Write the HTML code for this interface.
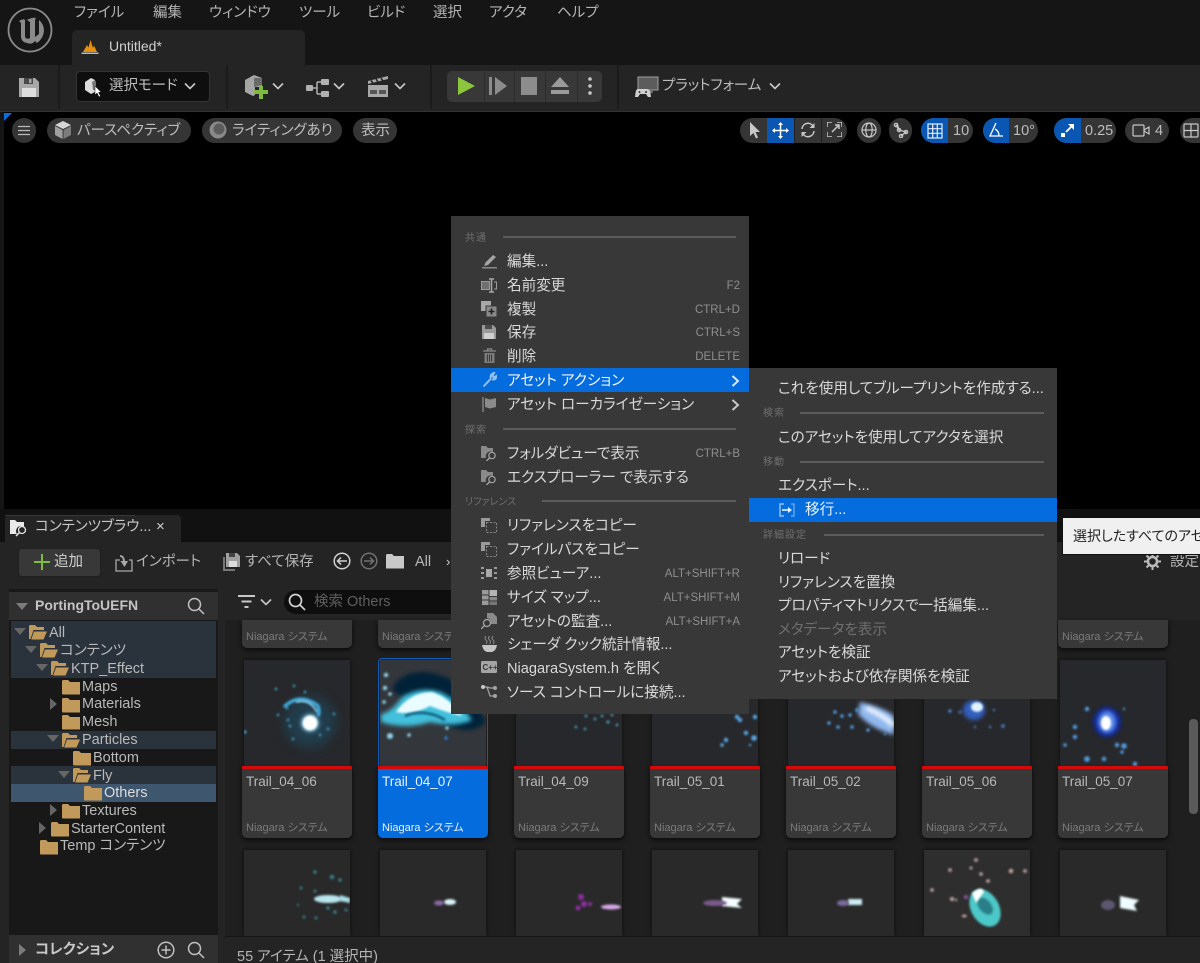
<!DOCTYPE html>
<html lang="ja"><head><meta charset="utf-8"><title>Untitled</title>
<style>
html,body{margin:0;padding:0;background:#000}
#r{position:relative;width:1200px;height:963px;overflow:hidden;background:#000;font-family:"Liberation Sans","Noto Sans CJK JP",sans-serif;font-size:14.5px;color:#c8c8c8;font-feature-settings:"palt"}
#r div,#r span,#r svg{position:absolute}
.t{white-space:nowrap;line-height:20px;height:20px;transform:translateY(1px)}
.m{color:#b4b4b4;top:2px;font-size:14.5px}
.c{background:#383838;border-radius:0 0 5px 5px;width:110px;box-shadow:0 2px 5px #0a0a0a}
.th{background:#27282b;box-shadow:0 0 4px #0c0c0c}
.rl{background:#d20a0a;height:3px;width:110px}
.n{font-size:13.5px;color:#b8b8b8}
.s{font-size:11px;color:#7b7b7b}
.i{color:#d9d9d9;font-size:14.6px}
.k{color:#8e8e8e;font-size:11.5px;text-align:right}
.h{color:#6f6f6f;font-size:10px;letter-spacing:1px}
.l{background:#5c5c5c;height:2px}
.tr{font-size:14.5px;color:#b9b9b9}
.hl{left:11px;width:205px;background:#2a323c}
.p{background:#353535;height:25px;border-radius:13px}
</style></head><body><div id="r">
<svg width="0" height="0" style="position:absolute"><defs>
<symbol id="fo" viewBox="0 0 18 16"><path d="M0 2.500Q0 1 1.500 1H6L8 3H18V15.500H1Q0 15.500 0 14.500Z" fill="#c19a5b"/></symbol>
<symbol id="fp" viewBox="0 0 18 16"><path d="M0 2.500Q0 1 1.500 1H6L8 3H15V6H4.500L1.500 15H0Z" fill="#c19a5b"/><path d="M5 7.500H18L14.500 15.500H2.200Z" fill="#c19a5b"/></symbol>
<filter id="b1" x="-50%" y="-50%" width="200%" height="200%"><feGaussianBlur stdDeviation="1"/></filter>
<filter id="b2" x="-50%" y="-50%" width="200%" height="200%"><feGaussianBlur stdDeviation="2.200"/></filter>
<filter id="b5" x="-50%" y="-50%" width="200%" height="200%"><feGaussianBlur stdDeviation="6"/></filter>
<clipPath id="cc"><rect x="244" y="660" width="106" height="106"/><rect x="380" y="660" width="106" height="106"/><rect x="516" y="660" width="106" height="106"/><rect x="652" y="660" width="106" height="106"/><rect x="788" y="660" width="106" height="106"/><rect x="924" y="660" width="106" height="106"/><rect x="1060" y="660" width="106" height="106"/><rect x="244" y="850" width="106" height="86"/><rect x="380" y="850" width="106" height="86"/><rect x="516" y="850" width="106" height="86"/><rect x="652" y="850" width="106" height="86"/><rect x="788" y="850" width="106" height="86"/><rect x="924" y="850" width="106" height="86"/><rect x="1060" y="850" width="106" height="86"/></clipPath>
</defs></svg>

<!-- title bar -->
<div style="left:0;top:0;width:1200px;height:65px;background:#151515"></div>
<svg style="left:7px;top:7px" width="46" height="46" viewBox="0 0 46 46"><circle cx="23" cy="23" r="21.500" fill="#171717" stroke="#8a8a8a" stroke-width="1.800"/><path d="M12 14Q17 11 18 13V30Q20 33 23 31V15L20 13Q25 10 29 11L28 13V30L32 27V13Q37 17 37 24Q36 32 30 36L28 34Q25 38 20 36Q14 35 14 29V16Z" fill="#8a8a8a"/></svg>
<span class="t m" style="left:74px">ファイル</span><span class="t m" style="left:153px">編集</span><span class="t m" style="left:209px">ウィンドウ</span><span class="t m" style="left:299px">ツール</span><span class="t m" style="left:367px">ビルド</span><span class="t m" style="left:433px">選択</span><span class="t m" style="left:489px">アクタ</span><span class="t m" style="left:557px">ヘルプ</span>
<div style="left:72px;top:30px;width:233px;height:36px;background:#242424;border-radius:5px 5px 0 0"></div>
<svg style="left:81px;top:39px" width="18" height="16" viewBox="0 0 18 16"><path d="M2 13L6 6L7.500 8.500L9.500 1L12 9L13 6.500L16 13Z" fill="#e88f0c"/><rect x="0.500" y="13.500" width="17" height="1.500" fill="#b9b9b9"/></svg>
<span class="t" style="left:109px;top:35px;color:#d0d0d0;font-size:14px">Untitled*</span>

<!-- toolbar -->
<div style="left:0;top:65px;width:1200px;height:46px;background:#242424"></div>
<div style="left:58px;top:65px;width:2px;height:44px;background:#1b1b1b"></div>
<div style="left:226px;top:65px;width:2px;height:44px;background:#1b1b1b"></div>
<div style="left:430px;top:65px;width:2px;height:44px;background:#1b1b1b"></div>
<div style="left:617px;top:65px;width:2px;height:44px;background:#1b1b1b"></div>
<svg style="left:19px;top:77px" width="20" height="20" viewBox="0 0 20 20"><path d="M0 1H16L20 5V20H0Z" fill="#a8a8a8"/><rect x="5" y="1" width="9" height="6" fill="#4a4a4a"/><rect x="10" y="2" width="2.500" height="4" fill="#a8a8a8"/><rect x="3" y="11" width="14" height="9" fill="#dedede"/></svg>
<div style="left:76px;top:71px;width:132px;height:29px;background:#0e0e0e;border:1px solid #333;border-radius:4px"></div>
<svg style="left:85px;top:78px" width="18" height="19" viewBox="0 0 18 19"><path d="M0 4L6 0L10 2V14L6 16L0 12Z" fill="#dcdcdc"/><path d="M7 4L10 2L11 4V12H8Z" fill="#777"/><path d="M10 8V17L12 15L14 19L15.500 18L13.500 14.500L16 14Z" fill="#fff" stroke="#111" stroke-width=".5"/></svg>
<span class="t" style="left:109px;top:75px;color:#bdbdbd">選択モード</span>
<svg style="left:184px;top:82px" width="12" height="8" viewBox="0 0 12 8"><path d="M1 1.500L6 6.500L11 1.500" fill="none" stroke="#c8c8c8" stroke-width="1.600"/></svg>
<svg style="left:244px;top:75px" width="24" height="24" viewBox="0 0 24 24"><path d="M1 5L10 0L18 3V12H11V20L9 21L1 17Z" fill="#a6a6a6"/><path d="M10 3L18 3V10L10 12Z" fill="#6a6a6a"/><path d="M15 11H19V15H24V19H19V24H15V19H10V15H15Z" fill="#7fbb41"/></svg>
<svg style="left:272px;top:82px" width="12" height="8" viewBox="0 0 12 8"><path d="M1 1.500L6 6.500L11 1.500" fill="none" stroke="#c8c8c8" stroke-width="1.600"/></svg>
<svg style="left:306px;top:78px" width="24" height="19" viewBox="0 0 24 19"><rect x="0" y="7" width="7" height="6" rx="1" fill="#b0b0b0"/><rect x="15" y="1" width="8" height="6" rx="1" fill="#b0b0b0"/><rect x="15" y="13" width="8" height="6" rx="1" fill="#b0b0b0"/><path d="M7 10H11M11 4V16M11 4H15M11 16H15" stroke="#b0b0b0" stroke-width="1.500" fill="none"/></svg>
<svg style="left:333px;top:82px" width="12" height="8" viewBox="0 0 12 8"><path d="M1 1.500L6 6.500L11 1.500" fill="none" stroke="#c8c8c8" stroke-width="1.600"/></svg>
<svg style="left:367px;top:76px" width="22" height="21" viewBox="0 0 22 21"><path d="M1 5L21 0V3L1 8Z" fill="#a8a8a8"/><path d="M4 4.500L6 7M9 3L11 6M14 2L16 5" stroke="#242424" stroke-width="1.500"/><rect x="1" y="9" width="20" height="12" fill="#a8a8a8"/><rect x="3" y="14" width="7" height="4" fill="#555"/><rect x="12" y="14" width="7" height="4" fill="#555"/></svg>
<svg style="left:394px;top:82px" width="12" height="8" viewBox="0 0 12 8"><path d="M1 1.500L6 6.500L11 1.500" fill="none" stroke="#c8c8c8" stroke-width="1.600"/></svg>
<div style="left:447px;top:71px;width:155px;height:31px;background:#383838;border-radius:5px"></div>
<div style="left:484px;top:71px;width:1px;height:31px;background:#2c2c2c"></div><div style="left:514px;top:71px;width:1px;height:31px;background:#2c2c2c"></div><div style="left:545px;top:71px;width:1px;height:31px;background:#2c2c2c"></div><div style="left:577px;top:71px;width:1px;height:31px;background:#2c2c2c"></div>
<svg style="left:456px;top:76px" width="20" height="20" viewBox="0 0 20 20"><path d="M2 1L19 10L2 19Z" fill="#8cc63f"/></svg>
<svg style="left:488px;top:77px" width="20" height="18" viewBox="0 0 20 18"><rect x="1" y="0" width="3" height="18" fill="#8c8c8c"/><path d="M7 0L19 9L7 18Z" fill="#8c8c8c"/></svg>
<svg style="left:520px;top:77px" width="18" height="18"><rect x="1" y="0" width="16" height="18" fill="#8c8c8c"/></svg>
<svg style="left:550px;top:77px" width="20" height="18" viewBox="0 0 20 18"><path d="M10 0L19 10H1Z" fill="#9a9a9a"/><rect x="1" y="13" width="18" height="4" fill="#9a9a9a"/></svg>
<svg style="left:587px;top:76px" width="6" height="20"><circle cx="3" cy="3" r="1.800" fill="#c8c8c8"/><circle cx="3" cy="10" r="1.800" fill="#c8c8c8"/><circle cx="3" cy="17" r="1.800" fill="#c8c8c8"/></svg>
<svg style="left:635px;top:76px" width="24" height="22" viewBox="0 0 24 22"><rect x="3" y="1" width="20" height="13" fill="#5c5c5c" stroke="#a0a0a0"/><rect x="8" y="14" width="10" height="3" fill="#6c6c6c"/><path d="M3 13H12Q15 13 15.500 17L16 21H13L11 18H5L3 21H0L.5 17Q1 13 3 13Z" fill="#d0d0d0"/><circle cx="4.500" cy="16" r="1" fill="#333"/><circle cx="11" cy="16" r="1" fill="#333"/></svg>
<span class="t" style="left:662px;top:75px;color:#bdbdbd">プラットフォーム</span>
<svg style="left:769px;top:82px" width="12" height="8" viewBox="0 0 12 8"><path d="M1 1.500L6 6.500L11 1.500" fill="none" stroke="#c8c8c8" stroke-width="1.600"/></svg>

<!-- viewport top -->
<div style="left:0;top:111px;width:1200px;height:1px;background:#0d3b66"></div>
<svg style="left:4px;top:113px" width="8" height="8"><path d="M0 0H8L0 8Z" fill="#0a6fd8"/></svg>
<div style="left:0;top:112px;width:4px;height:397px;background:#151515"></div>
<div class="p" style="left:12px;top:118px;width:24px"></div>
<svg style="left:18px;top:125px" width="12" height="11"><path d="M0 1.500H12M0 5.500H12M0 9.500H12" stroke="#bbb" stroke-width="1.300"/></svg>
<div class="p" style="left:47px;top:118px;width:144px"></div>
<svg style="left:54px;top:121px" width="18" height="18" viewBox="0 0 18 18"><path d="M9 0L17 4L9 8L1 4Z" fill="#d4d4d4"/><path d="M1 5L8.500 9V18L1 14Z" fill="#a0a0a0"/><path d="M17 5L9.500 9V18L17 14Z" fill="#7c7c7c"/></svg>
<span class="t" style="left:77px;top:120px;color:#bdbdbd">パースペクティブ</span>
<div class="p" style="left:202px;top:118px;width:140px"></div>
<svg style="left:209px;top:121px" width="18" height="18" viewBox="0 0 18 18"><circle cx="9" cy="9" r="8.500" fill="#8a8a8a"/><circle cx="10" cy="8" r="5.500" fill="#5c5c5c"/></svg>
<span class="t" style="left:232px;top:120px;color:#bdbdbd">ライティングあり</span>
<div class="p" style="left:353px;top:118px;width:44px"></div>
<span class="t" style="left:361px;top:120px;color:#bdbdbd">表示</span>

<!-- viewport right -->
<div class="p" style="left:740px;top:118px;width:107px"></div>
<div style="left:767px;top:118px;width:27px;height:25px;background:#0a57b3"></div>
<div style="left:794px;top:118px;width:1px;height:25px;background:#222"></div><div style="left:821px;top:118px;width:1px;height:25px;background:#222"></div>
<svg style="left:749px;top:122px" width="12" height="17" viewBox="0 0 12 17"><path d="M1 0L11 10H6.500L9 15.500L7 16.500L4.500 11L1 14Z" fill="#c8c8c8"/></svg>
<svg style="left:772px;top:122px" width="17" height="17" viewBox="0 0 17 17"><path d="M8.500 1V16M1 8.500H16" stroke="#fff" stroke-width="1.500"/><path d="M8.500 0L11 3H6ZM8.500 17L11 14H6ZM0 8.500L3 6V11ZM17 8.500L14 6V11Z" fill="#fff"/></svg>
<svg style="left:800px;top:122px" width="16" height="16" viewBox="0 0 16 16"><path d="M2 7A6 6 0 0 1 13 4M14 9A6 6 0 0 1 3 12" fill="none" stroke="#c8c8c8" stroke-width="1.500"/><path d="M14.500 1V6H9.500ZM1.500 15V10H6.500Z" fill="#c8c8c8"/></svg>
<svg style="left:827px;top:122px" width="15" height="15" viewBox="0 0 15 15"><path d="M0 5V0H5M10 15H15V10M0 10V15H5M15 5V0H10" fill="none" stroke="#c8c8c8" stroke-width="1.500"/><path d="M5 10L12 3M8 3H12V7" fill="none" stroke="#c8c8c8" stroke-width="1.500"/></svg>
<div class="p" style="left:857px;top:118px;width:24px"></div>
<svg style="left:861px;top:122px" width="16" height="16" viewBox="0 0 16 16" fill="none" stroke="#c8c8c8" stroke-width="1.200"><circle cx="8" cy="8" r="7"/><ellipse cx="8" cy="8" rx="3.200" ry="7"/><path d="M1 8H15"/></svg>
<div class="p" style="left:889px;top:118px;width:23px"></div>
<svg style="left:893px;top:122px" width="16" height="16" viewBox="0 0 16 16" fill="none" stroke="#c8c8c8" stroke-width="1.300"><path d="M3 3L6 8L13 10L8 14M6 8L4 1"/><circle cx="3" cy="3" r="1.600"/><circle cx="6" cy="8" r="1.600"/><circle cx="13" cy="10" r="1.600"/><circle cx="8" cy="14" r="1.600"/></svg>
<div class="p" style="left:921px;top:118px;width:52px"></div>
<div style="left:921px;top:118px;width:27px;height:25px;background:#0a57b3;border-radius:13px 0 0 13px"></div>
<svg style="left:927px;top:123px" width="16" height="16" viewBox="0 0 16 16" fill="none" stroke="#e4eefa" stroke-width="1.200"><rect x="1" y="1" width="14" height="14"/><path d="M5.700 1V15M10.300 1V15M1 5.700H15M1 10.300H15"/></svg>
<span class="t" style="left:953px;top:120px;color:#bdbdbd">10</span>
<div class="p" style="left:983px;top:118px;width:55px"></div>
<div style="left:983px;top:118px;width:26px;height:25px;background:#0a57b3;border-radius:13px 0 0 13px"></div>
<svg style="left:988px;top:122px" width="16" height="16" viewBox="0 0 16 16" fill="none" stroke="#fff" stroke-width="1.300"><path d="M8 1L2 14H15M7 7Q11 9 11 14"/></svg>
<span class="t" style="left:1013px;top:120px;color:#bdbdbd">10°</span>
<div class="p" style="left:1054px;top:118px;width:62px"></div>
<div style="left:1054px;top:118px;width:27px;height:25px;background:#0a57b3;border-radius:13px 0 0 13px"></div>
<svg style="left:1060px;top:123px" width="15" height="15" viewBox="0 0 15 15"><path d="M6 9L12 3" stroke="#fff" stroke-width="1.800"/><path d="M8 1H14V7ZM1 10H5V14H1Z" fill="#fff"/></svg>
<span class="t" style="left:1085px;top:120px;color:#bdbdbd">0.25</span>
<div class="p" style="left:1125px;top:118px;width:44px"></div>
<svg style="left:1132px;top:124px" width="19" height="13" viewBox="0 0 19 13" fill="none" stroke="#c8c8c8" stroke-width="1.200"><rect x="1" y="1" width="11" height="11" rx="1"/><path d="M12 6L17 3V10L12 7"/></svg>
<span class="t" style="left:1155px;top:120px;color:#bdbdbd">4</span>
<div class="p" style="left:1180px;top:118px;width:40px"></div>
<svg style="left:1183px;top:123px" width="16" height="15" viewBox="0 0 16 15" fill="none" stroke="#c8c8c8" stroke-width="1.200"><rect x="1" y="1" width="14" height="13" rx="1"/><path d="M8 1V14M1 7.500H15"/></svg>

<!-- content browser -->
<div style="left:0;top:509px;width:1200px;height:454px;background:#111"></div>
<div style="left:5px;top:515px;width:176px;height:27px;background:#242424;border-radius:4px 4px 0 0"></div>
<div style="left:5px;top:515px;width:130px;height:1px;background:#17405f"></div>
<svg style="left:10px;top:518px" width="19" height="19" viewBox="0 0 19 19"><path d="M0 2H5L7 4H14V9A5 5 0 0 0 7 16H0Z" fill="#e8e8e8"/><circle cx="12" cy="12" r="3.500" fill="none" stroke="#e8e8e8" stroke-width="1.300"/><path d="M9.500 14.500L6 18" stroke="#e8e8e8" stroke-width="1.500"/></svg>
<span class="t" style="left:35px;top:516px;color:#c8c8c8">コンテンツブラウ...</span>
<span class="t" style="left:156px;top:516px;color:#d0d0d0;font-size:15px">×</span>
<div style="left:0;top:542px;width:1200px;height:38px;background:#242424"></div>
<div style="left:18px;top:548px;width:81px;height:27px;background:#383838;border:1px solid #202020;border-radius:4px"></div>
<svg style="left:34px;top:554px" width="16" height="16"><path d="M8 0V16M0 8H16" stroke="#7fbb41" stroke-width="2"/></svg>
<span class="t" style="left:54px;top:551px;color:#d0d0d0">追加</span>
<svg style="left:115px;top:554px" width="18" height="18" viewBox="0 0 18 18" fill="none" stroke="#a8a8a8" stroke-width="1.300"><path d="M5 6H1V17H17V6H14"/><path d="M5 2Q9 2 9 8" stroke-width="1.800"/><path d="M5.500 7L9.500 13L13 7Z" fill="#a8a8a8" stroke="none"/></svg>
<span class="t" style="left:136px;top:551px;color:#b4b4b4">インポート</span>
<svg style="left:223px;top:553px" width="17" height="18" viewBox="0 0 17 18"><path d="M0 4H2V16H12V18H0Z" fill="#777"/><path d="M3 0H14L17 3V14H3Z" fill="#a0a0a0"/><rect x="6" y="0" width="6" height="4" fill="#444"/><rect x="6" y="8" width="8" height="6" fill="#dedede"/></svg>
<span class="t" style="left:245px;top:551px;color:#b4b4b4">すべて保存</span>
<svg style="left:333px;top:552px" width="18" height="18" viewBox="0 0 18 18" fill="none" stroke="#d0d0d0" stroke-width="1.500"><circle cx="9" cy="9" r="7.800"/><path d="M14 9H5M8 5.500L4.500 9L8 12.500"/></svg>
<svg style="left:360px;top:552px" width="18" height="18" viewBox="0 0 18 18" fill="none" stroke="#707070" stroke-width="1.500"><circle cx="9" cy="9" r="7.800"/><path d="M4 9H13M10 5.500L13.500 9L10 12.500"/></svg>
<svg style="left:386px;top:553px" width="18" height="16" viewBox="0 0 18 16"><path d="M0 2.500Q0 1 1.500 1H6L8 3H18V15.500H0Z" fill="#c8c8c8"/></svg>
<span class="t" style="left:415px;top:551px;color:#b8b8b8">All</span>
<span class="t" style="left:446px;top:551px;color:#d0d0d0;font-size:13px">›</span>
<svg style="left:1144px;top:553px" width="17" height="17" viewBox="0 0 17 17"><circle cx="8.500" cy="8.500" r="4.500" fill="none" stroke="#bbb" stroke-width="2.500"/><path d="M8.500 0V3M8.500 14V17M0 8.500H3M14 8.500H17M2.500 2.500L4.500 4.500M12.500 12.500L14.500 14.500M14.500 2.500L12.500 4.500M2.500 14.500L4.500 12.500" stroke="#bbb" stroke-width="2"/></svg>
<span class="t" style="left:1170px;top:551px;color:#b4b4b4">設定</span>

<!-- left panel -->
<div style="left:0;top:580px;width:225px;height:383px;background:#242424"></div>
<div style="left:9px;top:589px;width:209px;height:374px;background:#181818"></div>
<div style="left:9px;top:592px;width:209px;height:28px;background:#303030"></div>
<svg style="left:16px;top:603px" width="12" height="7"><path d="M0 0H12L6 7Z" fill="#7c7c7c"/></svg>
<span class="t" style="left:35px;top:594px;color:#c4c4c4;font-weight:700;font-size:14px">PortingToUEFN</span>
<svg style="left:187px;top:597px" width="18" height="18" viewBox="0 0 18 18" fill="none" stroke="#c0c0c0" stroke-width="1.500"><circle cx="7.500" cy="7.500" r="6"/><path d="M12 12L17 17"/></svg>
<div class="hl" style="top:621px;height:57px"></div>
<div class="hl" style="top:731px;height:18px"></div>
<div class="hl" style="top:766px;height:18px"></div>
<div class="hl" style="top:784px;height:18px;background:#3f566f"></div>
<svg style="left:14px;top:628px" width="12" height="7"><path d="M0 0H12L6 7Z" fill="#666"/></svg><svg style="left:29px;top:624px" width="18" height="16"><use href="#fp"/></svg><span class="t tr" style="left:49px;top:622px">All</span>
<svg style="left:25px;top:646px" width="12" height="7"><path d="M0 0H12L6 7Z" fill="#666"/></svg><svg style="left:40px;top:642px" width="18" height="16"><use href="#fp"/></svg><span class="t tr" style="left:60px;top:640px">コンテンツ</span>
<svg style="left:36px;top:664px" width="12" height="7"><path d="M0 0H12L6 7Z" fill="#666"/></svg><svg style="left:51px;top:660px" width="18" height="16"><use href="#fp"/></svg><span class="t tr" style="left:71px;top:658px">KTP_Effect</span>
<svg style="left:62px;top:679px" width="18" height="16"><use href="#fo"/></svg><span class="t tr" style="left:82px;top:676px">Maps</span>
<svg style="left:50px;top:698px" width="7" height="12"><path d="M0 0L7 6L0 12Z" fill="#666"/></svg><svg style="left:62px;top:697px" width="18" height="16"><use href="#fo"/></svg><span class="t tr" style="left:82px;top:693px">Materials</span>
<svg style="left:62px;top:714px" width="18" height="16"><use href="#fo"/></svg><span class="t tr" style="left:82px;top:711px">Mesh</span>
<svg style="left:47px;top:735px" width="12" height="7"><path d="M0 0H12L6 7Z" fill="#666"/></svg><svg style="left:62px;top:732px" width="18" height="16"><use href="#fp"/></svg><span class="t tr" style="left:82px;top:729px">Particles</span>
<svg style="left:73px;top:750px" width="18" height="16"><use href="#fo"/></svg><span class="t tr" style="left:93px;top:747px">Bottom</span>
<svg style="left:58px;top:771px" width="12" height="7"><path d="M0 0H12L6 7Z" fill="#666"/></svg><svg style="left:73px;top:767px" width="18" height="16"><use href="#fp"/></svg><span class="t tr" style="left:93px;top:765px">Fly</span>
<svg style="left:84px;top:785px" width="18" height="16"><use href="#fo"/></svg><span class="t tr" style="left:104px;top:782px;color:#dcdcdc">Others</span>
<svg style="left:50px;top:804px" width="7" height="12"><path d="M0 0L7 6L0 12Z" fill="#666"/></svg><svg style="left:62px;top:803px" width="18" height="16"><use href="#fo"/></svg><span class="t tr" style="left:82px;top:800px">Textures</span>
<svg style="left:39px;top:822px" width="7" height="12"><path d="M0 0L7 6L0 12Z" fill="#666"/></svg><svg style="left:51px;top:821px" width="18" height="16"><use href="#fo"/></svg><span class="t tr" style="left:71px;top:818px">StarterContent</span>
<svg style="left:40px;top:839px" width="18" height="16"><use href="#fo"/></svg><span class="t tr" style="left:60px;top:835px">Temp コンテンツ</span>
<div style="left:9px;top:935px;width:209px;height:28px;background:#303030"></div>
<svg style="left:19px;top:944px" width="7" height="12"><path d="M0 0L7 6L0 12Z" fill="#7c7c7c"/></svg>
<span class="t" style="left:35px;top:939px;color:#c8c8c8;font-weight:700">コレクション</span>
<svg style="left:157px;top:941px" width="18" height="18" viewBox="0 0 18 18" fill="none" stroke="#c0c0c0" stroke-width="1.500"><circle cx="9" cy="9" r="7.800"/><path d="M9 4.500V13.500M4.500 9H13.500"/></svg>
<svg style="left:187px;top:941px" width="18" height="18" viewBox="0 0 18 18" fill="none" stroke="#c0c0c0" stroke-width="1.500"><circle cx="7.500" cy="7.500" r="6"/><path d="M12 12L17 17"/></svg>

<!-- asset area -->
<div style="left:225px;top:580px;width:975px;height:383px;background:#1f1f1f"></div>
<div style="left:225px;top:580px;width:975px;height:40px;background:#242424"></div>
<svg style="left:238px;top:595px" width="17" height="13"><path d="M0 1H17M3.500 6.500H13.500M6.500 12H10.500" stroke="#c8c8c8" stroke-width="2"/></svg>
<svg style="left:260px;top:598px" width="12" height="8" viewBox="0 0 12 8"><path d="M1 1.500L6 6.500L11 1.500" fill="none" stroke="#c8c8c8" stroke-width="1.600"/></svg>
<div style="left:284px;top:590px;width:180px;height:24px;background:#0e0e0e;border-radius:12px"></div>
<svg style="left:288px;top:593px" width="18" height="18" viewBox="0 0 18 18" fill="none" stroke="#d0d0d0" stroke-width="1.700"><circle cx="7.500" cy="7.500" r="6"/><path d="M12 12L17 17"/></svg>
<span class="t" style="left:314px;top:591px;color:#5e5e5e">検索 Others</span>

<!-- top partial cards -->
<div class="c" style="left:242px;top:620px;height:28px"></div><div class="c" style="left:378px;top:620px;height:28px"></div><div class="c" style="left:1058px;top:620px;height:28px"></div>
<span class="t s" style="left:246px;top:626px">Niagara システム</span><span class="t s" style="left:382px;top:626px">Niagara システム</span><span class="t s" style="left:1062px;top:626px">Niagara システム</span>

<!-- cards row 1 -->
<div class="th" style="left:244px;top:660px;width:106px;height:106px"></div><div class="c" style="left:242px;top:767px;height:71px"></div><div class="rl" style="left:242px;top:766px"></div><span class="t n" style="left:246px;top:771px">Trail_04_06</span><span class="t s" style="left:246px;top:817px">Niagara システム</span>
<div style="left:378px;top:658px;width:108px;height:108px;border:1px solid #0b5cb5;border-radius:4px 4px 0 0"></div><div class="th" style="left:380px;top:660px;width:106px;height:106px;background:#33373c;box-shadow:none"></div><div class="c" style="left:378px;top:767px;height:71px;background:#046cdc"></div><div class="rl" style="left:378px;top:766px"></div><span class="t n" style="left:382px;top:771px;color:#e8f2fd">Trail_04_07</span><span class="t s" style="left:382px;top:817px;color:#e8f2fd">Niagara システム</span>
<div class="th" style="left:516px;top:660px;width:106px;height:106px"></div><div class="c" style="left:514px;top:767px;height:71px"></div><div class="rl" style="left:514px;top:766px"></div><span class="t n" style="left:518px;top:771px">Trail_04_09</span><span class="t s" style="left:518px;top:817px">Niagara システム</span>
<div class="th" style="left:652px;top:660px;width:106px;height:106px"></div><div class="c" style="left:650px;top:767px;height:71px"></div><div class="rl" style="left:650px;top:766px"></div><span class="t n" style="left:654px;top:771px">Trail_05_01</span><span class="t s" style="left:654px;top:817px">Niagara システム</span>
<div class="th" style="left:788px;top:660px;width:106px;height:106px"></div><div class="c" style="left:786px;top:767px;height:71px"></div><div class="rl" style="left:786px;top:766px"></div><span class="t n" style="left:790px;top:771px">Trail_05_02</span><span class="t s" style="left:790px;top:817px">Niagara システム</span>
<div class="th" style="left:924px;top:660px;width:106px;height:106px"></div><div class="c" style="left:922px;top:767px;height:71px"></div><div class="rl" style="left:922px;top:766px"></div><span class="t n" style="left:926px;top:771px">Trail_05_06</span><span class="t s" style="left:926px;top:817px">Niagara システム</span>
<div class="th" style="left:1060px;top:660px;width:106px;height:106px"></div><div class="c" style="left:1058px;top:767px;height:71px"></div><div class="rl" style="left:1058px;top:766px"></div><span class="t n" style="left:1062px;top:771px">Trail_05_07</span><span class="t s" style="left:1062px;top:817px">Niagara システム</span>

<!-- cards row 2 -->
<div class="th" style="left:244px;top:850px;width:106px;height:86px;background:#292929"></div>
<div class="th" style="left:380px;top:850px;width:106px;height:86px;background:#292929"></div>
<div class="th" style="left:516px;top:850px;width:106px;height:86px;background:#292929"></div>
<div class="th" style="left:652px;top:850px;width:106px;height:86px;background:#292929"></div>
<div class="th" style="left:788px;top:850px;width:106px;height:86px;background:#292929"></div>
<div class="th" style="left:924px;top:850px;width:106px;height:86px;background:#2e2e2e"></div>
<div class="th" style="left:1060px;top:850px;width:106px;height:86px;background:#292929"></div>

<!-- thumbnail art -->
<svg style="left:0;top:0" width="1200" height="963" viewBox="0 0 1200 963"><g clip-path="url(#cc)">
<circle cx="310" cy="722" r="26" fill="#176f9c" opacity=".3" filter="url(#b5)"/>
<path d="M284 707Q300 692 318 706Q320 712 318 716" fill="none" stroke="#3ea8dc" stroke-width="3.500" filter="url(#b1)"/>
<path d="M296 702Q310 698 317 712" fill="none" stroke="#8fd0f0" stroke-width="2" filter="url(#b1)"/>
<circle cx="310" cy="723" r="9" fill="#8fe0ff" opacity=".7" filter="url(#b2)"/>
<circle cx="310" cy="723" r="7.500" fill="#fff" filter="url(#b1)"/>
<g fill="#46b8e0" filter="url(#b1)"><circle cx="276" cy="689" r="1.200"/><circle cx="294" cy="686" r="1.200"/><circle cx="305" cy="692" r="1.200"/><circle cx="287" cy="708" r="1.200"/><circle cx="278" cy="715" r="1.200"/><circle cx="288" cy="720" r="1.200"/><circle cx="290" cy="726" r="1.200"/><circle cx="245" cy="732" r="1.500"/><circle cx="293" cy="739" r="1.200"/><circle cx="328" cy="729" r="1.200"/><circle cx="334" cy="714" r="1.200"/><circle cx="320" cy="735" r="1.200"/></g>

<path d="M392 690Q398 672 425 672Q465 676 486 722Q470 738 440 722Q410 704 392 690Z" fill="#052038" filter="url(#b2)"/>
<path d="M381 714Q392 712 402 697Q420 686 440 692Q458 700 472 720Q455 728 430 722Q405 730 381 722Z" fill="#42c0dc" filter="url(#b2)"/>
<path d="M396 712Q410 692 432 692Q450 698 462 716Q445 712 430 706Q412 716 396 712Z" fill="#eafcff" filter="url(#b1)"/>
<path d="M405 716Q425 708 445 720" stroke="#0a5a78" stroke-width="2.500" fill="none" filter="url(#b1)"/>
<g fill="#8dd4e4" filter="url(#b1)"><circle cx="386" cy="675" r="2.200"/><circle cx="385" cy="688" r="2.200"/><circle cx="390" cy="694" r="1.800"/><circle cx="384" cy="702" r="1.800"/><circle cx="409" cy="735" r="1.800"/><circle cx="390" cy="736" r="3"/><circle cx="447" cy="728" r="1.800"/></g><circle cx="446" cy="738" r="1.800" fill="#2f78c8" filter="url(#b1)"/>

<g fill="#4fc0de" filter="url(#b1)"><circle cx="586" cy="716" r="1.200"/><circle cx="595" cy="719" r="1.200"/><circle cx="602" cy="716" r="1.200"/><circle cx="608" cy="722" r="1.400"/><circle cx="612" cy="715" r="1.200"/><circle cx="617" cy="725" r="1.200"/><circle cx="576" cy="727" r="1.200"/><circle cx="585" cy="729" r="1.200"/></g>

<g fill="#57a8e8" filter="url(#b1)"><circle cx="737" cy="717" r="2.200"/><circle cx="740" cy="720" r="2.200"/><circle cx="755" cy="717" r="2.200"/><circle cx="746" cy="733" r="2.200"/><circle cx="754" cy="738" r="2.800"/><circle cx="726" cy="740" r="2.200"/><circle cx="722" cy="745" r="1.800"/><circle cx="750" cy="745" r="1.200"/></g>

<path d="M860 702Q885 708 894 716V735Q870 728 858 714Z" fill="#8fb8f0" filter="url(#b2)"/>
<path d="M866 708Q885 716 894 726" stroke="#fff" stroke-width="4" fill="none" filter="url(#b2)"/>
<g fill="#4f9ce0" filter="url(#b1)"><circle cx="835" cy="712" r="1.800"/><circle cx="842" cy="716" r="1.800"/><circle cx="850" cy="715" r="1.800"/><circle cx="857" cy="710" r="1.800"/><circle cx="829" cy="723" r="1.800"/><circle cx="838" cy="727" r="1.800"/><circle cx="852" cy="727" r="1.800"/><circle cx="868" cy="730" r="1.800"/><circle cx="885" cy="734" r="1.200"/></g>

<ellipse cx="974" cy="710" rx="11" ry="10" fill="#305fc0" filter="url(#b2)"/><ellipse cx="977" cy="707" rx="6" ry="5" fill="#e0f4ff" filter="url(#b1)"/>
<g fill="#4c80d0" filter="url(#b1)"><circle cx="950" cy="711" r="1.800"/><circle cx="960" cy="712" r="1.400"/><circle cx="994" cy="710" r="1.200"/><circle cx="1003" cy="726" r="1.800"/><circle cx="975" cy="727" r="1.200"/><circle cx="990" cy="727" r="1.200"/></g>

<ellipse cx="1107" cy="722" rx="14" ry="15" fill="#10289a" filter="url(#b2)"/><ellipse cx="1107" cy="722" rx="9" ry="11" fill="#5f90f0" filter="url(#b2)"/><ellipse cx="1106" cy="723" rx="5" ry="7" fill="#fff" filter="url(#b1)"/>
<g fill="#4f9ce0" filter="url(#b1)"><circle cx="1075" cy="727" r="2.200"/><circle cx="1075" cy="737" r="2.200"/><circle cx="1065" cy="745" r="1.800"/><circle cx="1087" cy="709" r="2.200"/><circle cx="1117" cy="745" r="2.200"/><circle cx="1124" cy="746" r="2.800"/><circle cx="1087" cy="759" r="2.800"/><circle cx="1104" cy="759" r="2.200"/><circle cx="1135" cy="764" r="2.200"/><circle cx="1122" cy="752" r="1.800"/><circle cx="1124" cy="709" r="1.200"/></g>

<ellipse cx="328" cy="899" rx="14" ry="4" fill="#b8e6ec" filter="url(#b1)"/><path d="M340 895L350 898V903L340 901Z" fill="#a8dfe8" filter="url(#b1)"/>
<g fill="#3c8c94" filter="url(#b1)" opacity=".9"><circle cx="315" cy="872" r="1.800"/><circle cx="332" cy="877" r="2.200"/><circle cx="340" cy="880" r="1.800"/><circle cx="301" cy="888" r="1.500"/><circle cx="315" cy="891" r="1.500"/><circle cx="328" cy="908" r="1.800"/><circle cx="335" cy="912" r="1.800"/><circle cx="316" cy="918" r="1.500"/><circle cx="304" cy="917" r="1.500"/><circle cx="346" cy="910" r="1.500"/><circle cx="298" cy="905" r="1.200"/></g>

<ellipse cx="450" cy="902" rx="6" ry="3" fill="#d8f4f8" filter="url(#b1)"/><ellipse cx="439" cy="903" rx="5" ry="2.500" fill="#8a6aa8" filter="url(#b1)"/>

<ellipse cx="611" cy="907" rx="10" ry="2.500" fill="#d8a8e8" filter="url(#b1)"/><g fill="#8b2fa0" filter="url(#b1)"><circle cx="581" cy="897" r="3"/><circle cx="584" cy="904" r="3"/><circle cx="578" cy="908" r="2.500"/><circle cx="590" cy="904" r="2"/></g>

<path d="M722 897L742 899L737 904L742 908L722 906Z" fill="#f4ffff" filter="url(#b1)"/><ellipse cx="715" cy="903" rx="12" ry="3" fill="#7a5a8c" filter="url(#b1)"/>

<path d="M848 899H862V905H848Z" fill="#cbeef4" filter="url(#b1)"/><ellipse cx="843" cy="903" rx="6" ry="3" fill="#7a6a9c" filter="url(#b1)"/>

<ellipse cx="985" cy="908" rx="14" ry="20" transform="rotate(-30 985 908)" fill="#4dc8c8" filter="url(#b1)"/><ellipse cx="985" cy="906" rx="6" ry="10" transform="rotate(-40 985 906)" fill="#2b7e88" filter="url(#b1)"/><path d="M972 893Q982 885 984 892L976 903Z" fill="#fff" filter="url(#b1)"/><circle cx="966" cy="897" r="2" fill="#9050a8" filter="url(#b1)"/>
<g fill="#c8a8a8" filter="url(#b1)"><circle cx="976" cy="860" r="1.800"/><circle cx="950" cy="870" r="1.800"/><circle cx="971" cy="868" r="1.500"/><circle cx="981" cy="874" r="1.800"/><circle cx="988" cy="881" r="1.800"/><circle cx="1011" cy="871" r="2.200"/><circle cx="1025" cy="871" r="1.800"/><circle cx="952" cy="899" r="2"/><circle cx="956" cy="900" r="1.200"/><circle cx="963" cy="916" r="1.200"/><circle cx="965" cy="916" r="1.500"/><circle cx="932" cy="890" r="1.800"/></g>

<path d="M1120 896L1139 900L1134 905L1137 911L1120 908Z" fill="#effcff" filter="url(#b1)"/><ellipse cx="1108" cy="905" rx="7" ry="5" fill="#5b5670" filter="url(#b1)"/>
</g></svg>

<div style="left:1189px;top:719px;width:9px;height:95px;background:#5a5a5a;border-radius:4px"></div>
<div style="left:225px;top:936px;width:975px;height:27px;background:#242424;border-top:1px solid #151515"></div>
<span class="t" style="left:237px;top:946px;color:#b4b4b4">55 アイテム (1 選択中)</span>

<!-- tooltip -->
<div style="left:1062px;top:517px;width:150px;height:36px;background:#f0f0f0;border:1px solid #111"></div>
<span class="t" style="left:1073px;top:525px;color:#222;font-size:14px">選択したすべてのアセッ</span>

<!-- main menu -->
<div style="left:451px;top:216px;width:298px;height:498px;background:#383838"></div>
<div style="left:451px;top:368px;width:298px;height:24px;background:#046cdc"></div>
<span class="t h" style="left:465px;top:228px">共通</span><div class="l" style="left:503px;top:236px;width:233px"></div>
<span class="t h" style="left:465px;top:420px">探索</span><div class="l" style="left:503px;top:428px;width:233px"></div>
<span class="t h" style="left:465px;top:492px;letter-spacing:0">リファレンス</span><div class="l" style="left:542px;top:500px;width:194px"></div>

<span class="t i" style="left:507px;top:251px">編集...</span>
<span class="t i" style="left:507px;top:275px">名前変更</span>
<span class="t i" style="left:507px;top:299px">複製</span>
<span class="t i" style="left:507px;top:322px">保存</span>
<span class="t i" style="left:507px;top:346px">削除</span>
<span class="t i" style="left:507px;top:370px;color:#eef5fd">アセット アクション</span>
<span class="t i" style="left:507px;top:394px">アセット ローカライゼーション</span>
<span class="t i" style="left:507px;top:443px">フォルダビューで表示</span>
<span class="t i" style="left:507px;top:467px">エクスプローラー で表示する</span>
<span class="t i" style="left:507px;top:515px">リファレンスをコピー</span>
<span class="t i" style="left:507px;top:539px">ファイルパスをコピー</span>
<span class="t i" style="left:507px;top:563px">参照ビューア...</span>
<span class="t i" style="left:507px;top:587px">サイズ マップ...</span>
<span class="t i" style="left:507px;top:611px">アセットの監査...</span>
<span class="t i" style="left:507px;top:634px">シェーダ クック統計情報...</span>
<span class="t i" style="left:507px;top:658px">NiagaraSystem.h を開く</span>
<span class="t i" style="left:507px;top:682px">ソース コントロールに接続...</span>

<span class="t k" style="right:460px;top:275px">F2</span>
<span class="t k" style="right:460px;top:299px">CTRL+D</span>
<span class="t k" style="right:460px;top:322px">CTRL+S</span>
<span class="t k" style="right:460px;top:346px">DELETE</span>
<span class="t k" style="right:460px;top:443px">CTRL+B</span>
<span class="t k" style="right:460px;top:563px">ALT+SHIFT+R</span>
<span class="t k" style="right:460px;top:587px">ALT+SHIFT+M</span>
<span class="t k" style="right:460px;top:611px">ALT+SHIFT+A</span>

<svg style="left:731px;top:375px" width="9" height="12" viewBox="0 0 9 12"><path d="M1.500 1L7 6L1.500 11" fill="none" stroke="#d8e8fa" stroke-width="2"/></svg>
<svg style="left:731px;top:399px" width="9" height="12" viewBox="0 0 9 12"><path d="M1.500 1L7 6L1.500 11" fill="none" stroke="#c8c8c8" stroke-width="2"/></svg>

<!-- menu icons -->
<svg style="left:482px;top:254px" width="15" height="15" viewBox="0 0 15 15"><path d="M11 1L14 3L6 11L2 12L3.500 8.500Z" fill="#a4a4a4"/><rect x="0" y="13" width="15" height="1.500" fill="#8a8a8a"/></svg>
<svg style="left:481px;top:278px" width="16" height="15" viewBox="0 0 16 15"><rect x="0.500" y="3.500" width="8" height="8" fill="#6e6e6e" stroke="#9a9a9a"/><path d="M8 1H13M8 14H13M10.500 1V14" stroke="#a8a8a8" stroke-width="1.500"/><path d="M13 4H15.500V11H13" stroke="#9a9a9a" fill="none"/></svg>
<svg style="left:481px;top:301px" width="16" height="16" viewBox="0 0 16 16"><rect x="0" y="0" width="10" height="10" fill="#a8a8a8"/><rect x="5" y="5" width="11" height="11" fill="#8a8a8a" stroke="#383838"/><path d="M10.500 7.500V13.500M7.500 10.500H13.500" stroke="#222" stroke-width="1.600"/></svg>
<svg style="left:482px;top:325px" width="14" height="14" viewBox="0 0 14 14"><path d="M0 0H11L14 3V14H0Z" fill="#9a9a9a"/><rect x="3" y="0" width="7" height="4" fill="#4c4c4c"/><rect x="2" y="8" width="10" height="6" fill="#d0d0d0"/></svg>
<svg style="left:483px;top:348px" width="13" height="15" viewBox="0 0 13 15"><path d="M0 3H13M4.500 3V1H8.500V3" stroke="#8a8a8a" fill="none" stroke-width="1.300"/><path d="M1.500 5H11.500V15H1.500Z" fill="#7c7c7c"/><path d="M4.500 6.500V13.500M6.500 6.500V13.500M8.500 6.500V13.500" stroke="#383838"/></svg>
<svg style="left:482px;top:372px" width="15" height="16" viewBox="0 0 15 16"><path d="M1.500 14.500L9 6.500M9 6.500Q7.500 2.500 12 1L10.500 4L12 5.500L14.500 4Q14 8 10 7.500" fill="none" stroke="#8fc0f0" stroke-width="2"/></svg>
<svg style="left:482px;top:396px" width="15" height="16" viewBox="0 0 15 16"><path d="M1 1V16" stroke="#777" stroke-width="1.800"/><path d="M3 2L8 3.500L14 2V11L8 12.500L3 11Z" fill="#8a8a8a"/></svg>
<svg style="left:481px;top:445px" width="16" height="16" viewBox="0 0 16 16"><path d="M0 1H5L7 3H12V7A5 5 0 0 0 5 13H0Z" fill="#8a8a8a"/><circle cx="11" cy="10.500" r="3.200" fill="none" stroke="#a8a8a8" stroke-width="1.200"/><path d="M8.500 13L5.500 16" stroke="#a8a8a8" stroke-width="1.300"/></svg>
<svg style="left:481px;top:469px" width="16" height="16" viewBox="0 0 16 16"><path d="M0 1H5L7 3H12V7A5 5 0 0 0 5 13H0Z" fill="#8a8a8a"/><circle cx="11" cy="10.500" r="3.200" fill="none" stroke="#a8a8a8" stroke-width="1.200"/><path d="M8.500 13L5.500 16" stroke="#a8a8a8" stroke-width="1.300"/></svg>
<svg style="left:481px;top:518px" width="16" height="15" viewBox="0 0 16 15"><path d="M0 0H9V3H4V9H0Z" fill="#9a9a9a"/><rect x="5.500" y="4.500" width="10" height="10" fill="none" stroke="#8a8a8a" stroke-dasharray="2 1.500"/></svg>
<svg style="left:481px;top:542px" width="16" height="15" viewBox="0 0 16 15"><path d="M0 0H9V3H4V9H0Z" fill="#9a9a9a"/><rect x="5.500" y="4.500" width="10" height="10" fill="none" stroke="#8a8a8a" stroke-dasharray="2 1.500"/></svg>
<svg style="left:481px;top:567px" width="16" height="12" viewBox="0 0 16 12"><rect x="5" y="2" width="6" height="8" fill="#a8a8a8"/><g fill="#9a9a9a"><rect x="0" y="0" width="3" height="2"/><rect x="0" y="5" width="3" height="2"/><rect x="0" y="10" width="3" height="2"/><rect x="13" y="0" width="3" height="2"/><rect x="13" y="5" width="3" height="2"/><rect x="13" y="10" width="3" height="2"/></g></svg>
<svg style="left:482px;top:590px" width="15" height="15" viewBox="0 0 15 15"><rect width="6.500" height="15" fill="#9a9a9a"/><rect x="7.500" width="7.500" height="6" fill="#b4b4b4"/><rect x="7.500" y="7" width="7.500" height="3.500" fill="#888"/><rect x="7.500" y="11.500" width="7.500" height="3.500" fill="#777"/><path d="M0 5H6.500M0 10H6.500" stroke="#383838"/></svg>
<svg style="left:481px;top:613px" width="16" height="16" viewBox="0 0 16 16"><path d="M6 0H12L16 4V11H10A5 5 0 0 0 6 5Z" fill="#8a8a8a"/><circle cx="6" cy="10" r="3.500" fill="none" stroke="#a8a8a8" stroke-width="1.200"/><path d="M3.500 12.500L0 16" stroke="#a8a8a8" stroke-width="1.300"/></svg>
<svg style="left:482px;top:636px" width="15" height="16" viewBox="0 0 15 16"><path d="M4 0Q2 2 4 4T4 8M7.500 0Q5.500 2 7.500 4T7.500 8M11 0Q9 2 11 4T11 8" fill="none" stroke="#8a8a8a"/><path d="M0 9H15Q14 15 10 16H5Q1 15 0 9Z" fill="#c4c4c4"/></svg>
<svg style="left:481px;top:661px" width="16" height="13" viewBox="0 0 16 13"><rect width="16" height="12" rx="1.500" fill="#a4a4a4"/><text x="1.500" y="9" font-size="8" font-weight="700" fill="#383838" font-family="Liberation Sans">C++</text></svg>
<svg style="left:481px;top:685px" width="16" height="14" viewBox="0 0 16 14" fill="none" stroke="#a4a4a4" stroke-width="1.200"><path d="M2 2H6L9 11H14M6 2L9 3H14"/><circle cx="2" cy="2" r="2" fill="#c8c8c8" stroke="none"/><circle cx="14" cy="3" r="2" fill="#a4a4a4" stroke="none"/><circle cx="14" cy="11" r="2" fill="#a4a4a4" stroke="none"/></svg>

<!-- submenu -->
<div style="left:749px;top:368px;width:308px;height:331px;background:#383838"></div>
<div style="left:749px;top:498px;width:308px;height:24px;background:#046cdc"></div>
<span class="t h" style="left:763px;top:403px">検索</span><div class="l" style="left:800px;top:412px;width:244px"></div>
<span class="t h" style="left:763px;top:452px">移動</span><div class="l" style="left:800px;top:461px;width:244px"></div>
<span class="t h" style="left:763px;top:525px">詳細設定</span><div class="l" style="left:824px;top:534px;width:220px"></div>
<span class="t i" style="left:778px;top:378px">これを使用してブループリントを作成する...</span>
<span class="t i" style="left:778px;top:427px">このアセットを使用してアクタを選択</span>
<span class="t i" style="left:778px;top:475px">エクスポート...</span>
<svg style="left:779px;top:503px" width="16" height="14" viewBox="0 0 16 14" fill="none"><path d="M5 1H1V13H5" stroke="#8fc0f0" stroke-width="1.500"/><path d="M12 1H15V13H12" stroke="#8fc0f0" stroke-width="1"/><path d="M3 7H10" stroke="#e8f2fd" stroke-width="1.600"/><path d="M9 4L13 7L9 10Z" fill="#e8f2fd"/></svg>
<span class="t i" style="left:805px;top:499px;color:#eef5fd">移行...</span>
<span class="t i" style="left:778px;top:548px">リロード</span>
<span class="t i" style="left:778px;top:572px">リファレンスを置換</span>
<span class="t i" style="left:778px;top:595px">プロパティマトリクスで一括編集...</span>
<span class="t i" style="left:778px;top:619px;color:#6e6e6e">メタデータを表示</span>
<span class="t i" style="left:778px;top:642px">アセットを検証</span>
<span class="t i" style="left:778px;top:666px">アセットおよび依存関係を検証</span>
</div></body></html>
